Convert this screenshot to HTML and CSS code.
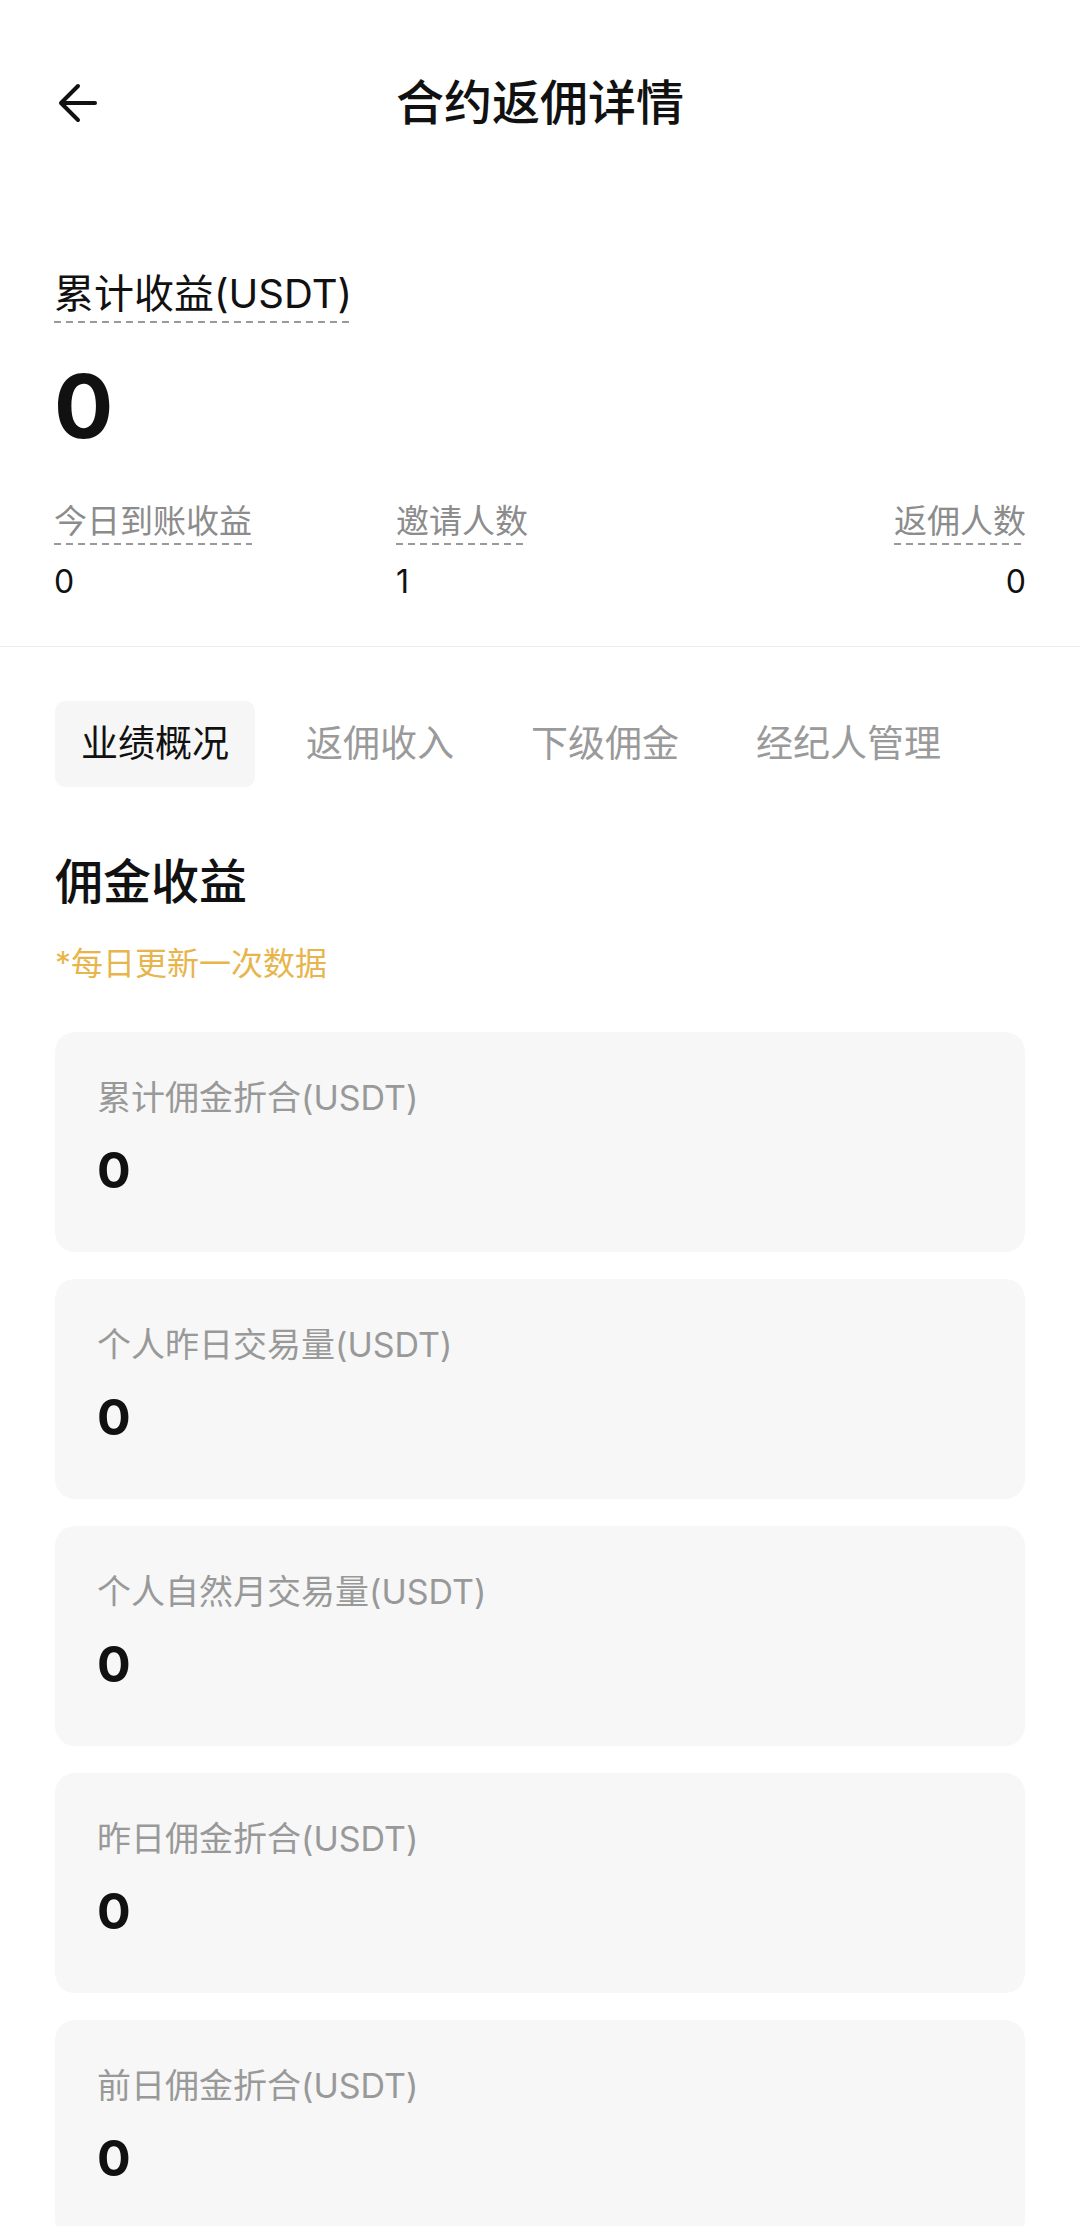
FILE: index.html
```html
<!DOCTYPE html>
<html lang="zh-CN">
<head>
    <meta charset="UTF-8">
    <meta name="viewport" content="width=device-width, initial-scale=1.0">
    <title>合约返佣详情</title>
    <link rel="stylesheet" href="styles.css">
</head>
<body>
    <header class="topbar">
        <a class="back" href="#">
            <svg width="40" height="40" viewBox="0 0 40 40" fill="none" stroke="#111" stroke-width="4" stroke-linecap="round" stroke-linejoin="round">
                <path d="M37 20H4"/>
                <path d="M20 3L3 20L20 37"/>
            </svg>
        </a>
        <h1>合约返佣详情</h1>
        <span></span>
    </header>

    <section class="summary">
        <div class="total-label"><span class="dotted">累计收益(USDT)</span></div>
        <div class="total-value">0</div>

        <div class="stats">
            <div class="stat">
                <span class="dotted stat-label">今日到账收益</span>
                <span class="stat-value">0</span>
            </div>
            <div class="stat">
                <span class="dotted stat-label">邀请人数</span>
                <span class="stat-value">1</span>
            </div>
            <div class="stat stat-right">
                <span class="dotted stat-label">返佣人数</span>
                <span class="stat-value">0</span>
            </div>
        </div>
    </section>

    <main class="content">
        <nav class="tabs">
            <a class="tab active" href="#">业绩概况</a>
            <a class="tab" href="#">返佣收入</a>
            <a class="tab" href="#">下级佣金</a>
            <a class="tab" href="#">经纪人管理</a>
        </nav>

        <h2 class="section-title">佣金收益</h2>
        <p class="note">*每日更新一次数据</p>

        <div class="cards">
            <div class="card">
                <div class="card-label">累计佣金折合(USDT)</div>
                <div class="card-value">0</div>
            </div>
            <div class="card">
                <div class="card-label">个人昨日交易量(USDT)</div>
                <div class="card-value">0</div>
            </div>
            <div class="card">
                <div class="card-label">个人自然月交易量(USDT)</div>
                <div class="card-value">0</div>
            </div>
            <div class="card">
                <div class="card-label">昨日佣金折合(USDT)</div>
                <div class="card-value">0</div>
            </div>
            <div class="card">
                <div class="card-label">前日佣金折合(USDT)</div>
                <div class="card-value">0</div>
            </div>
        </div>
    </main>
</body>
</html>
```

FILE: styles.css
```css
body {
    margin: 0;
    background-color: #fff;
    color: #111;
    font-family: Inter, "Noto Sans CJK SC", sans-serif;
}

/* top bar */
.topbar {
    display: grid;
    grid-template-columns: 1fr auto 1fr;
    align-items: center;
    height: 206px;
    padding-left: 58px;
    padding-right: 58px;
}

.back {
    display: flex;
    width: 40px;
    height: 40px;
}

.topbar h1 {
    margin: 0;
    font-size: 48px;
    font-weight: 500;
    line-height: 64px;
    color: #111;
}

/* dashed underline under hint labels */
.dotted {
    display: inline-block;
    padding-bottom: 2px;
    background-image: linear-gradient(to right, #9a9a9a 58%, transparent 0);
    background-size: 12px 2px;
    background-repeat: repeat-x;
    background-position: left bottom;
}

.summary {
    padding: 61px 54px 42px;
    border-bottom: 1px solid #ececec;
}

.total-label {
    font-size: 40px;
    line-height: 54px;
    color: #111;
}

.total-value {
    margin-top: 33px;
    font-size: 88px;
    font-weight: 700;
    line-height: 100px;
}

.stats {
    display: grid;
    grid-template-columns: 342px 1fr auto;
    margin-top: 43px;
}

.stat {
    display: flex;
    flex-direction: column;
    align-items: flex-start;
}

.stat-right {
    align-items: flex-end;
}

.stat-label {
    font-size: 33px;
    line-height: 44px;
    color: #8c8c8c;
}

.stat-value {
    margin-top: 15px;
    font-size: 32px;
    line-height: 44px;
    color: #111;
}

/* tabs + cards */
.content {
    padding: 54px 55px 0;
}

.tabs {
    display: flex;
    gap: 25px;
}

.tab {
    height: 86px;
    padding: 0 26px;
    border-radius: 10px;
    font-size: 37px;
    line-height: 86px;
    color: #9a9a9a;
    text-decoration: none;
}

.tab.active {
    background-color: #f6f6f6;
    color: #111;
}

.section-title {
    margin: 63px 0 0;
    font-size: 48px;
    font-weight: 500;
    line-height: 64px;
}

.note {
    margin: 28px 0 0;
    font-size: 32px;
    line-height: 44px;
    color: #e8b54d;
}

.cards {
    display: flex;
    flex-direction: column;
    gap: 27px;
    margin-top: 46px;
}

.card {
    height: 220px;
    box-sizing: border-box;
    padding: 43px 42px 0;
    border-radius: 20px;
    background-color: #f7f7f7;
}

.card-label {
    font-size: 34px;
    line-height: 46px;
    color: #999;
}

.card-value {
    margin-top: 19px;
    font-size: 50px;
    font-weight: 700;
    line-height: 60px;
}
```
